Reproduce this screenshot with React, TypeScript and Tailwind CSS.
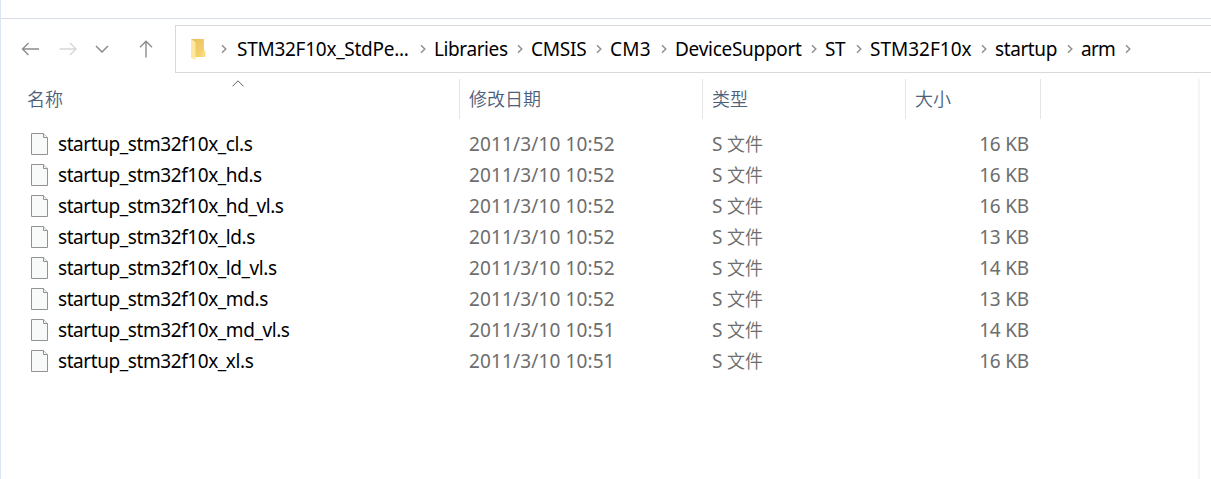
type Crumb = { label: string; box: string; spacing: string };

const crumbs: Crumb[] = [
  { label: "STM32F10x_StdPe...", box: "w-[197px]", spacing: "tracking-[-0.27px]" },
  { label: "Libraries", box: "w-[97px]", spacing: "tracking-[-0.4px]" },
  { label: "CMSIS", box: "w-[79px]", spacing: "tracking-[-0.2px]" },
  { label: "CM3", box: "w-[65px]", spacing: "tracking-[0.2px]" },
  { label: "DeviceSupport", box: "w-[150px]", spacing: "tracking-[-0.28px]" },
  { label: "ST", box: "w-[45px]", spacing: "tracking-[-0.4px]" },
  { label: "STM32F10x", box: "w-[125px]", spacing: "tracking-[0px]" },
  { label: "startup", box: "w-[86px]", spacing: "tracking-[-0.4px]" },
  { label: "arm", box: "w-[58px]", spacing: "tracking-[-0.7px]" },
];

const files = [
  { name: "startup_stm32f10x_cl.s", date: "2011/3/10 10:52", size: "16 KB" },
  { name: "startup_stm32f10x_hd.s", date: "2011/3/10 10:52", size: "16 KB" },
  { name: "startup_stm32f10x_hd_vl.s", date: "2011/3/10 10:52", size: "16 KB" },
  { name: "startup_stm32f10x_ld.s", date: "2011/3/10 10:52", size: "13 KB" },
  { name: "startup_stm32f10x_ld_vl.s", date: "2011/3/10 10:52", size: "14 KB" },
  { name: "startup_stm32f10x_md.s", date: "2011/3/10 10:52", size: "13 KB" },
  { name: "startup_stm32f10x_md_vl.s", date: "2011/3/10 10:51", size: "14 KB" },
  { name: "startup_stm32f10x_xl.s", date: "2011/3/10 10:51", size: "16 KB" },
];

const columns = [
  { label: "名称", box: "w-[459px] pl-[26px]" },
  { label: "修改日期", box: "w-[243px] pl-[9px]" },
  { label: "类型", box: "w-[203px] pl-[9px]" },
  { label: "大小", box: "w-[135px] pl-[9px]" },
];

function Chevron() {
  return (
    <svg className="shrink-0" width="6" height="10" viewBox="0 0 6 10" fill="none">
      <path d="M1 1.2L4.8 5L1 8.8" stroke="#909090" strokeWidth="1.5" />
    </svg>
  );
}

function FolderIcon() {
  return (
    <svg className="shrink-0" width="15" height="22" viewBox="0 0 15 22">
      <defs>
        <linearGradient id="back" x1="0" y1="0" x2="1" y2="1">
          <stop offset="0" stopColor="#e8bf58" />
          <stop offset="1" stopColor="#f8d878" />
        </linearGradient>
        <linearGradient id="flap" x1="0" y1="0" x2="0" y2="1">
          <stop offset="0" stopColor="#fde8a4" />
          <stop offset="1" stopColor="#ffe79b" />
        </linearGradient>
      </defs>
      <path d="M0 1H13V12.5L14.2 13V19H3Z" fill="url(#back)" />
      <path d="M11.5 13.5L14.2 12.5V19H11.5Z" fill="#fcdc80" />
      <path d="M0 1L4.5 4V22L0 19.5Z" fill="url(#flap)" />
    </svg>
  );
}

function FileIcon() {
  return (
    <svg className="shrink-0" width="17" height="22" viewBox="0 0 17 22">
      <path d="M.5.5H12.5L16.5 4.5V21.5H.5Z" fill="#f8f9f9" stroke="#929292" />
      <path d="M12.5.5V4.5H16.5" fill="#f2f2f2" stroke="#929292" />
    </svg>
  );
}

function Navigation() {
  return (
    <div className="flex h-12 w-[174px] shrink-0 items-center pb-px">
      <svg className="ml-5" width="18" height="14" viewBox="0 0 18 14" fill="none">
        <path d="M7.5 1L1.5 7L7.5 13M1.5 7H18" stroke="#8c8c8c" strokeWidth="1.4" />
      </svg>
      <svg className="ml-5" width="18" height="14" viewBox="0 0 18 14" fill="none">
        <path d="M11 1L17 7L11 13M17 7H.5" stroke="#d6d6d6" strokeWidth="1.4" />
      </svg>
      <svg className="ml-[18px]" width="14" height="8" viewBox="0 0 14 8" fill="none">
        <path d="M1 1L7 7L13 1" stroke="#8c8c8c" strokeWidth="1.5" />
      </svg>
      <svg className="ml-[30px]" width="14" height="18" viewBox="0 0 14 18" fill="none">
        <path d="M1 7.2L7 1.2L13 7.2M7 1.2V17.5" stroke="#8c8c8c" strokeWidth="1.4" />
      </svg>
    </div>
  );
}

export default function App() {
  return (
    <div className="h-[479px] w-[1211px] overflow-hidden border-l border-[#dce5f3] bg-white font-['Noto_Sans','Noto_Sans_CJK_SC',sans-serif] text-[19px]">
      <div className="h-[19px] border-b border-[#d6dfe8]" />
      <div className="flex pt-1.5">
        <Navigation />
        <div className="flex h-12 flex-1 items-center border-y border-l border-[#d9d9d9] pl-[15px] text-black">
          <FolderIcon />
          <div className="ml-[15px] mr-[10px] flex">
            <Chevron />
          </div>
          {crumbs.map((crumb) => (
            <div key={crumb.label} className={`flex shrink-0 items-center justify-between whitespace-nowrap pr-[8px] ${crumb.box}`}>
              <span className={`leading-[26px] ${crumb.spacing}`}>{crumb.label}</span>
              <Chevron />
            </div>
          ))}
        </div>
      </div>

      <div className="flex pt-1.5">
        <div className="w-[1197px] shrink-0">
          <div className="flex h-10">
            {columns.map((column, index) => (
              <div
                key={column.label}
                className={`relative flex shrink-0 items-center border-r border-[#e5e5e5] pb-0.5 font-['Noto_Sans_CJK_SC',sans-serif] text-[18px] font-[350] leading-[26px] text-[#4c607a] ${column.box}`}
              >
                {column.label}
                {index === 0 && (
                  <svg className="absolute left-[231px] top-px" width="12" height="7" viewBox="0 0 12 7" fill="none">
                    <path d="M.5 6.3L6 .8L11.5 6.3" stroke="#606060" strokeWidth="1" />
                  </svg>
                )}
              </div>
            ))}
          </div>
          <div className="pt-[9px]">
            {files.map((file) => (
              <div key={file.name} className="flex h-[31px] items-center whitespace-nowrap leading-[26px] text-[#6d6d6d]">
                <div className="flex w-[468px] shrink-0 items-center gap-[10px] pl-[30px]">
                  <FileIcon />
                  <span className="tracking-[-0.42px] text-black">{file.name}</span>
                </div>
                <span className="w-[243px] shrink-0 tracking-[0.13px]">{file.date}</span>
                <span className="flex w-[203px] shrink-0 items-center">
                  <span className="w-[15px]">S</span>
                  <span className="pb-0.5 font-['Noto_Sans_CJK_SC',sans-serif] text-[18px] font-[350]">文件</span>
                </span>
                <span className="w-[114px] shrink-0 text-right tracking-[-0.2px]">{file.size}</span>
              </div>
            ))}
          </div>
        </div>
        <div className="h-[400px] w-0.5 bg-[#f5f5f5]" />
      </div>
    </div>
  );
}
